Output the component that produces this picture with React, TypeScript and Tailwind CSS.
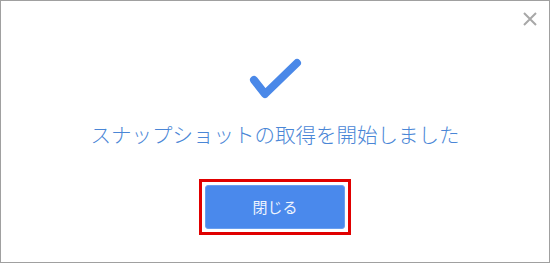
export default function App() {
	return (
		<div
			className="relative w-[550px] h-[263px] border border-[#a0a0a0] bg-white flex flex-col items-center"
			style={{fontFamily: '"Noto Sans CJK JP", "Noto Sans", sans-serif'}}
		>
			{/* close */}
			<button className="absolute left-[521px] top-[10px] w-[16px] h-[16px] flex items-center justify-center">
				<svg width="16" height="16" viewBox="0 0 16 16">
					<path d="M2 2 L14 14 M14 2 L2 14" stroke="#a8a8a8" strokeWidth="2" fill="none" />
				</svg>
			</button>

			<svg className="mt-[54px] block" width="60" height="45" viewBox="0 0 60 45">
				<path
					d="M9 25 L20 39 L52 8"
					stroke="#4a88e8"
					strokeWidth="8"
					strokeLinecap="round"
					strokeLinejoin="round"
					fill="none"
				/>
			</svg>

			<p className="mt-[18px] text-[20.5px] leading-[32px] text-[#4a86d6] font-light">
				スナップショットの取得を開始しました
			</p>

			<div className="mt-[29px] border-[3px] border-[#e00000] p-[3px]">
				<button className="w-[140px] h-[44px] rounded-[3px] bg-[#4a89ec] border border-[#6a9ff0] text-[#eef4fe] text-[15px] flex items-center justify-center">
					閉じる
				</button>
			</div>
		</div>
	);
}
